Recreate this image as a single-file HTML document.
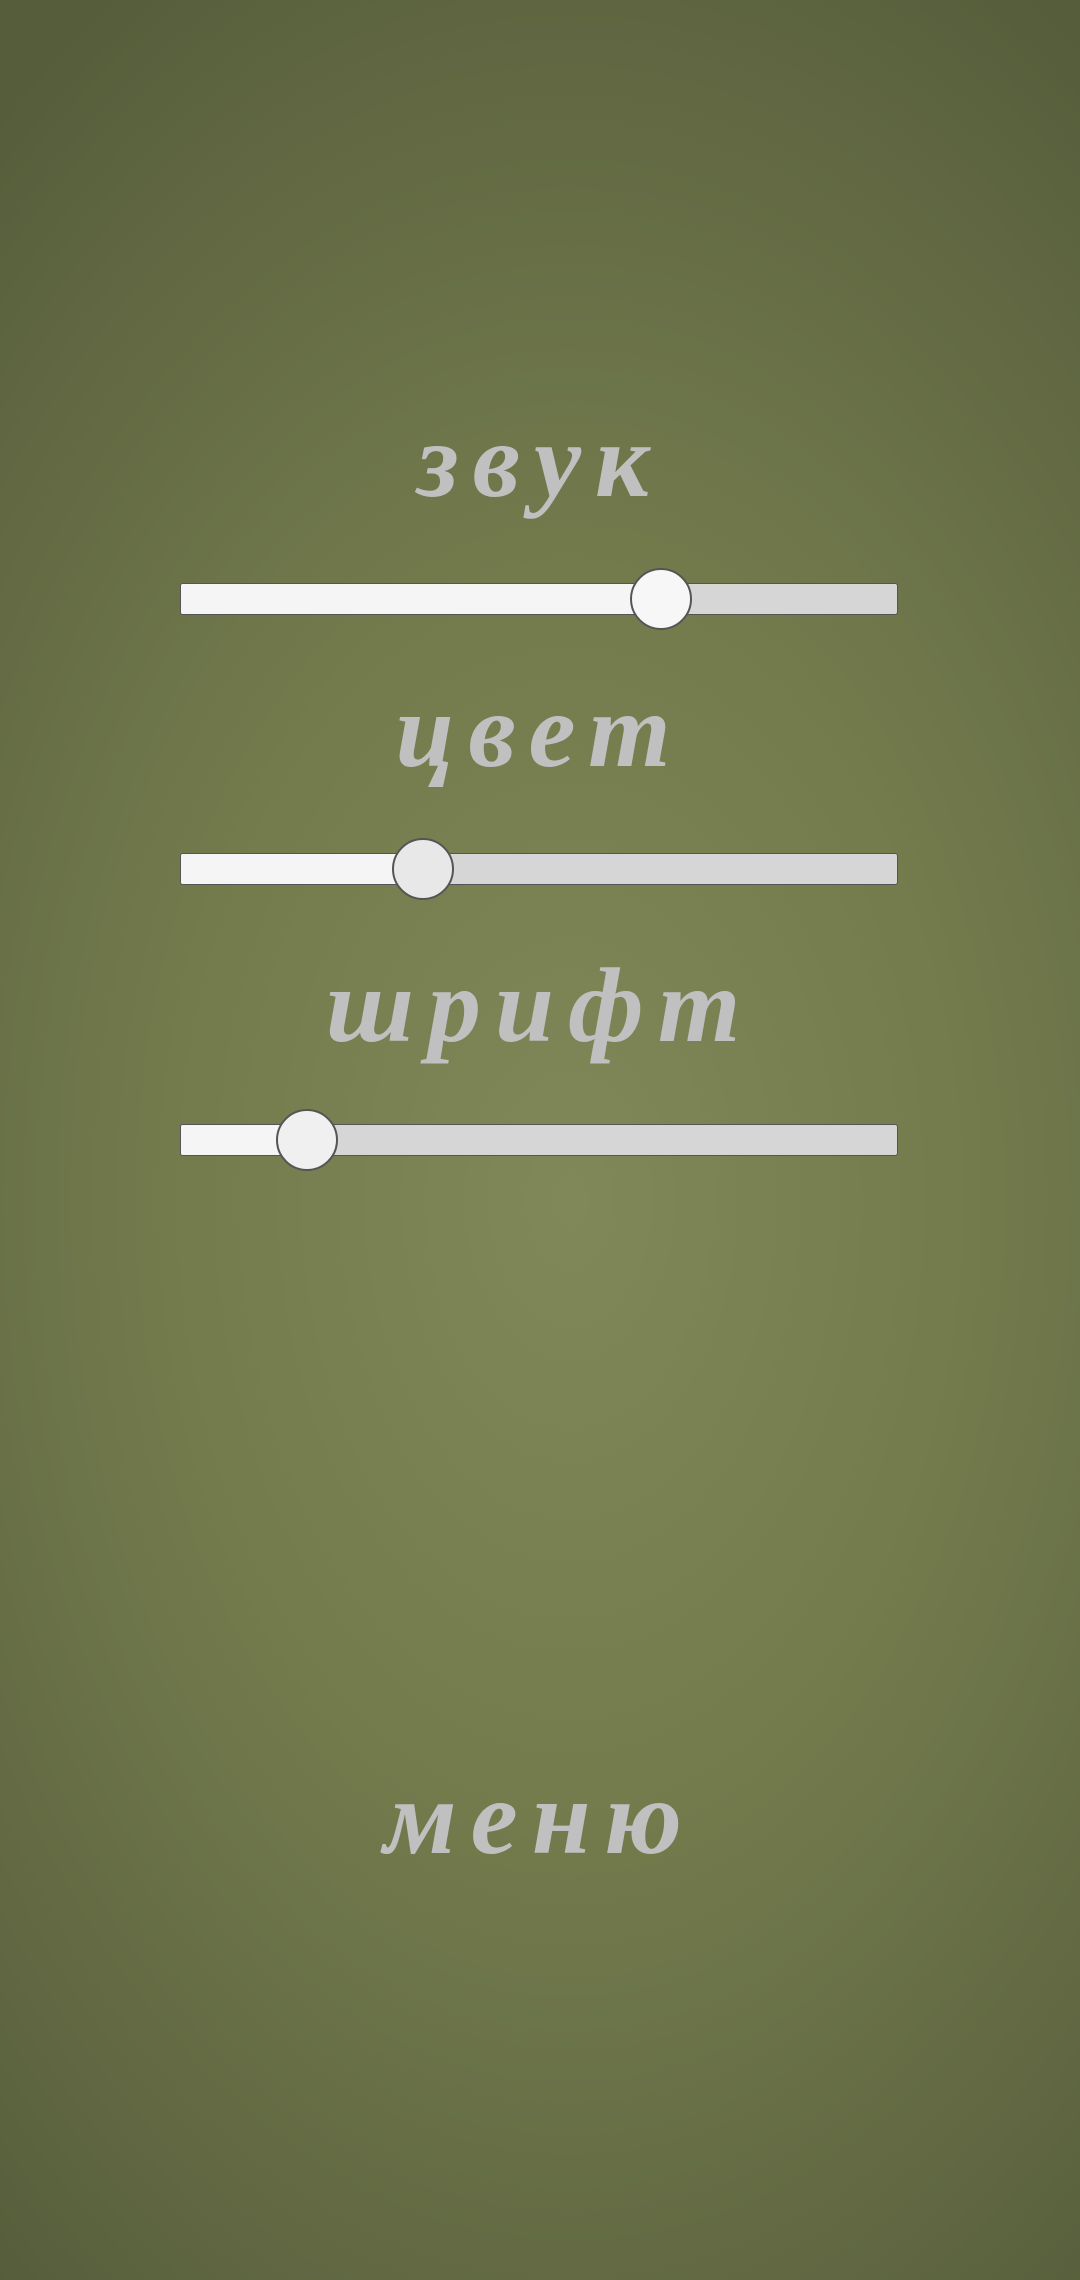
<!DOCTYPE html>
<html><head><meta charset="utf-8"><style>
html,body{margin:0;padding:0}
body{width:1080px;height:2280px;position:relative;overflow:hidden;
background:radial-gradient(ellipse 900px 1400px at 570px 1200px,#80885a 0%,#737b4d 45%,#646b44 75%,#565d3b 100%);
font-family:"Liberation Serif","DejaVu Serif",serif;}
.t{position:absolute;left:0;width:1080px;text-align:center;color:#c0c0c0;font-style:italic;font-weight:bold;font-size:106px;letter-spacing:14px;line-height:1}
.track{position:absolute;left:180px;width:718px;height:32px;border:1px solid #555;border-radius:3px;background:#d6d6d6;box-sizing:border-box;overflow:hidden}
.fill{position:absolute;left:0;top:0;bottom:0;background:#f5f5f5}
.th{position:absolute;width:62px;height:62px;border-radius:50%;border:2px solid #555;background:#f0f0f0;box-sizing:border-box}
</style></head><body>
<div class="t" style="top:408px">звук</div>
<div class="track" style="top:583px"><div class="fill" style="width:481px"></div></div>
<div class="th" style="left:630px;top:568px;background:#f7f7f7"></div>

<div class="t" style="top:678px">цвет</div>
<div class="track" style="top:853px"><div class="fill" style="width:243px"></div></div>
<div class="th" style="left:392px;top:838px;background:#e8e8e8"></div>

<div class="t" style="top:953px">шрифт</div>
<div class="track" style="top:1124px"><div class="fill" style="width:127px"></div></div>
<div class="th" style="left:276px;top:1109px;background:#f0f0f0"></div>

<div class="t" style="top:1765px">меню</div>
</body></html>
